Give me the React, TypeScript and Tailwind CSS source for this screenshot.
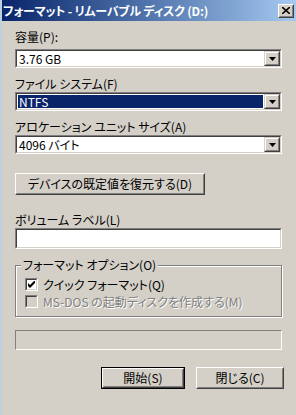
import React from "react";

const font = "font-['Noto_Sans_CJK_JP','Noto_Sans',sans-serif] [font-feature-settings:'palt']";

function Arrow() {
  return (
    <svg width="7" height="4" viewBox="0 0 7 4" className="block">
      <path d="M0 0h7L3.5 4z" fill="#000" />
    </svg>
  );
}

function DropButton() {
  return (
    <div className="w-[16px] h-full border border-t-[#d4d0c8] border-l-[#d4d0c8] border-r-[#404040] border-b-[#404040]">
      <div className="w-full h-full bg-[#d4d0c8] border border-t-white border-l-white border-r-[#808080] border-b-[#808080] flex items-center justify-center">
        <Arrow />
      </div>
    </div>
  );
}

function Sunken({ children, className = "" }: { children?: React.ReactNode; className?: string }) {
  return (
    <div className={`border border-t-[#808080] border-l-[#808080] border-r-white border-b-white ${className}`}>
      <div className="w-full h-full flex border border-t-[#404040] border-l-[#404040] border-r-[#d4d0c8] border-b-[#d4d0c8] bg-white">
        {children}
      </div>
    </div>
  );
}

function Combo({ value, selected = false }: { value: string; selected?: boolean }) {
  return (
    <Sunken className="h-[19px]">
      <div className="flex-1 flex items-center pl-px pr-px py-px">
        <div
          className={`h-full w-full flex items-center pl-[1px] text-[12px] leading-none ${
            selected ? "bg-[#0a246a] text-white" : "text-black"
          }`}
        >
          {value}
        </div>
      </div>
      <DropButton />
    </Sunken>
  );
}

function Button({ label, def = false, className = "" }: { label: string; def?: boolean; className?: string }) {
  const inner = (
    <div className="w-full h-full border border-t-white border-l-white border-r-[#404040] border-b-[#404040]">
      <div className="w-full h-full border border-t-[#d4d0c8] border-l-[#d4d0c8] border-r-[#808080] border-b-[#808080] flex items-center justify-center text-[12px] text-black leading-none">
        {label}
      </div>
    </div>
  );
  if (def) {
    return <div className={`border border-black ${className}`}>{inner}</div>;
  }
  return <div className={className}>{inner}</div>;
}

function Check({ checked, disabled }: { checked?: boolean; disabled?: boolean }) {
  return (
    <div className="w-[13px] h-[13px] border border-t-[#808080] border-l-[#808080] border-r-white border-b-white">
      <div
        className={`w-full h-full border border-t-[#404040] border-l-[#404040] border-r-[#d4d0c8] border-b-[#d4d0c8] flex items-center justify-center ${
          disabled ? "bg-[#d4d0c8]" : "bg-white"
        }`}
      >
        {checked && (
          <svg width="7" height="7" viewBox="0 0 7 7" className="block">
            <path d="M0 2v3l2 2 5-5V-1L2 4z" fill="#000" />
          </svg>
        )}
      </div>
    </div>
  );
}

export default function App() {
  return (
    <div className={`w-[296px] h-[415px] bg-[#d4d0c8] flex flex-col border-l-2 border-l-[#bcd0de] ${font}`}>
      {/* Title bar */}
      <div className="h-[21px] flex items-center justify-between pl-[1px] pr-[2px] bg-gradient-to-r from-[#0a246a] to-[#a6caf0]">
        <span className="text-white font-bold text-[12px] leading-none tracking-[-0.2px]">
          フォーマット - リムーバブル ディスク (D:)
        </span>
        <div className="w-[16px] h-[14px] border border-t-white border-l-white border-r-[#404040] border-b-[#404040] bg-[#d4d0c8]">
          <div className="w-full h-full border border-t-[#d4d0c8] border-l-[#d4d0c8] border-r-[#808080] border-b-[#808080] flex items-center justify-center">
            <svg width="8" height="7" viewBox="0 0 8 7" className="block">
              <path d="M0 0l8 7M8 0L0 7" stroke="#000" strokeWidth="1.6" />
            </svg>
          </div>
        </div>
      </div>

      <div className="flex flex-col pl-[13px] pr-[14px] text-black text-[12px]">
        <div className="mt-[8px] h-[16px] leading-[16px]">容量(P):</div>
        <div className="mt-[4px]">
          <Combo value="3.76 GB" />
        </div>

        <div className="mt-[8px] h-[16px] leading-[16px]">ファイル システム(F)</div>
        <Combo value="NTFS" selected />

        <div className="mt-[8px] h-[16px] leading-[16px]">アロケーション ユニット サイズ(A)</div>
        <Combo value="4096 バイト" />

        <Button label="デバイスの既定値を復元する(D)" className="mt-[19px] w-[190px] h-[22px]" />

        <div className="mt-[17px] h-[16px] leading-[16px]">ボリューム ラベル(L)</div>
        <Sunken className="h-[21px]" />

        {/* Group box */}
        <div className="relative mt-[16px] h-[52px] border border-[#808080] shadow-[inset_1px_1px_0_#fff,1px_1px_0_#fff]">
          <div className="absolute -top-[9px] left-[5px] px-[2px] bg-[#d4d0c8] leading-[16px]">
            フォーマット オプション(O)
          </div>
          <div className="flex flex-col pl-[9px] pt-[12px] gap-[4px]">
            <div className="flex items-center gap-[5px] h-[13px]">
              <Check checked />
              <span className="leading-none">クイック フォーマット(Q)</span>
            </div>
            <div className="flex items-center gap-[5px] h-[13px]">
              <Check disabled />
              <span className="leading-none text-[#808080] [text-shadow:1px_1px_0_#fff]">
                MS-DOS の起動ディスクを作成する(M)
              </span>
            </div>
          </div>
        </div>

        {/* Progress bar */}
        <div className="mt-[13px] h-[20px] border border-t-[#808080] border-l-[#808080] border-r-white border-b-white" />

        <div className="mt-[17px] -mr-[2px] flex justify-end gap-[11px]">
          <Button label="開始(S)" def className="w-[84px] h-[22px]" />
          <Button label="閉じる(C)" className="w-[88px] h-[22px]" />
        </div>
      </div>
    </div>
  );
}
